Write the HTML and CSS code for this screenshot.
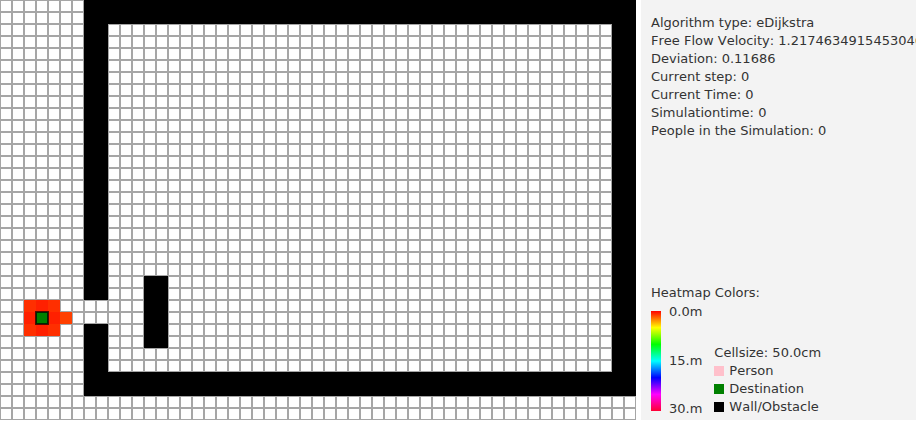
FILE: index.html
```html
<!DOCTYPE html>
<html lang="en">
<head>
  <meta charset="UTF-8">
  <title>Simulation</title>
  <link rel="stylesheet" href="styles.css">
</head>
<body>

  <div class="window">
    <!-- Simulation grid, drawn in map.js -->
    <canvas id="map" width="636" height="420"></canvas>

    <div class="panel">
      <div class="info">
        <div class="line">Algorithm type: eDijkstra</div>
        <div class="line">Free Flow Velocity: 1.2174634915453046</div>
        <div class="line">Deviation: 0.11686</div>
        <div class="line">Current step: 0</div>
        <div class="line">Current Time: 0</div>
        <div class="line">Simulationtime: 0</div>
        <div class="line">People in the Simulation: 0</div>
      </div>

      <div class="legend">
        <div class="line">Heatmap Colors:</div>
        <div class="legend-body">
          <div class="heat-bar"></div>
          <div class="heat-labels">
            <span>0.0m</span>
            <span>15.m</span>
            <span>30.m</span>
          </div>
          <div class="keys">
            <div class="line">Cellsize: 50.0cm</div>
            <div class="line key"><span class="swatch person"></span>Person</div>
            <div class="line key"><span class="swatch destination"></span>Destination</div>
            <div class="line key"><span class="swatch wall"></span>Wall/Obstacle</div>
          </div>
        </div>
      </div>
    </div>
  </div>

  <script src="map.js"></script>

</body>
</html>
```

FILE: styles.css
```css
body {
  margin: 0;
  background: white;
  font-family: "DejaVu Sans", sans-serif;
  font-size: 13px;
  font-kerning: none;
  color: #333;
}
.window {
  display: flex;
  height: 420px;
}
#map {
  display: block;
  flex: none;
  margin-right: 5px;
}
.panel {
  flex: 1;
  min-width: 0;
  display: flex;
  flex-direction: column;
  justify-content: space-between;
  padding: 14px 0 2px 10px;
  background: #f3f3f3;
  overflow: hidden;
}
.line {
  height: 18px;
  line-height: 18px;
  white-space: nowrap;
}
.legend-body {
  display: flex;
  margin-top: 9px;
}
.heat-bar {
  width: 10px;
  height: 100px;
  background: linear-gradient(to bottom, #ff0000, #ffff00 16.67%, #00ff00 33.33%, #00ffff 50%, #0000ff 66.67%, #ff00ff 83.33%, #ff0033);
}
.heat-labels {
  display: flex;
  flex-direction: column;
  justify-content: space-between;
  height: 115px;
  margin: -8px 0 0 8px;
  line-height: 18px;
}
.keys {
  margin: 33px 0 0 12px;
}
.key {
  display: flex;
  align-items: center;
  gap: 5px;
}
.swatch {
  width: 10px;
  height: 10px;
}
.person {
  background: #ffc0cb;
}
.destination {
  background: #008000;
}
.wall {
  background: black;
}
```

FILE: map.js
```js
const CELL = 12;
const canvas = document.getElementById('map');
const ctx = canvas.getContext('2d');

function fillCells(color, col, row, cols, rows) {
  ctx.fillStyle = color;
  ctx.fillRect(col * CELL, row * CELL, cols * CELL, rows * CELL);
}

ctx.fillStyle = 'white';
ctx.fillRect(0, 0, canvas.width, canvas.height);

// grid lines are two pixels wide, centred on the cell edge
ctx.strokeStyle = '#a6a6a6';
ctx.lineWidth = 2;
ctx.beginPath();
for (let x = 0; x <= canvas.width; x += CELL) {
  ctx.moveTo(x, 0);
  ctx.lineTo(x, canvas.height);
}
for (let y = 0; y <= canvas.height; y += CELL) {
  ctx.moveTo(0, y);
  ctx.lineTo(canvas.width, y);
}
ctx.stroke();

// walls
fillCells('black', 7, 0, 46, 2);
fillCells('black', 7, 0, 2, 25);
fillCells('black', 7, 27, 2, 6);
fillCells('black', 7, 31, 46, 2);
fillCells('black', 51, 0, 2, 33);
fillCells('black', 12, 23, 2, 6);

// heat around the destination
fillCells('#ff2f00', 2, 25, 3, 3);
fillCells('#ff2000', 3, 25, 1, 3);
fillCells('#ff2000', 2, 26, 3, 1);
fillCells('#ff4000', 5, 26, 1, 1);

// destination
fillCells('#008000', 3, 26, 1, 1);
ctx.strokeStyle = 'rgba(0, 0, 0, 0.7)';
ctx.lineWidth = 2;
ctx.strokeRect(36, 312, 12, 12);
```
